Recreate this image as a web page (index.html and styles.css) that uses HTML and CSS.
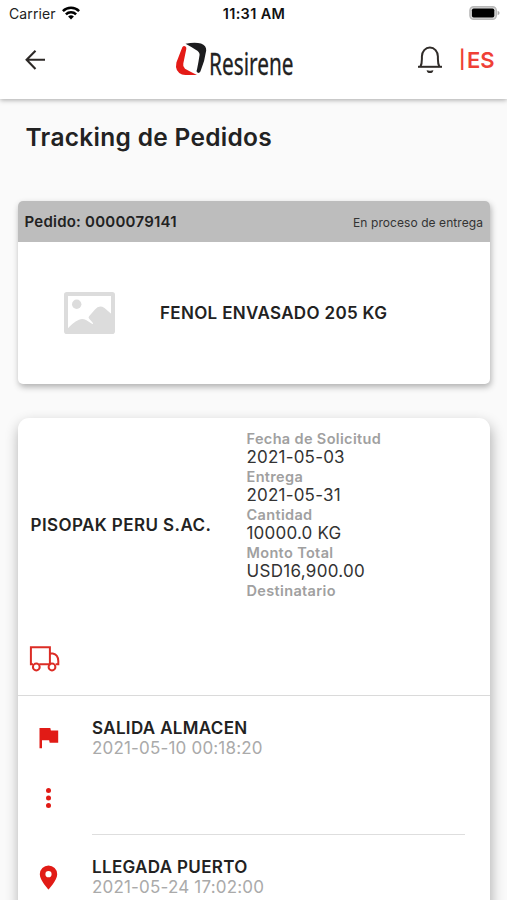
FILE: index.html
```html
<!DOCTYPE html>
<html lang="es">
<head>
<meta charset="utf-8">
<title>Tracking de Pedidos</title>
<link rel="stylesheet" href="styles.css">
</head>
<body>
<div class="screen">
  <header class="top">
    <div class="status">
      <div class="carrier"><span>Carrier</span>
        <svg width="18" height="14" viewBox="0 0 18 14" fill="none" stroke="#000" stroke-width="2.5"><path d="M.9 5.2a11.5 11.5 0 0 1 16.2 0"/><path d="M3.9 8.3a7.2 7.2 0 0 1 10.2 0"/><path d="M9 13.6 6.1 10.6a4.1 4.1 0 0 1 5.8 0z" fill="#000" stroke="none"/></svg>
      </div>
      <span class="clock">11:31 AM</span>
      <svg class="battery" width="31" height="14" viewBox="0 0 31 14"><rect x=".9" y=".7" width="26.4" height="12.6" rx="3.8" fill="#d8d8d8" stroke="#b8b8b8" stroke-width="1.4"/><rect x="2.9" y="2.4" width="22.4" height="9.2" rx="1.8" fill="#000"/><path d="M28.6 4.8q2 .8 2 2.200t-2 2.200z" fill="#aaa"/></svg>
    </div>
    <nav class="bar">
      <svg class="back" width="21" height="20" viewBox="0 0 21 20" fill="none" stroke="#2d2927" stroke-width="2.100"><path d="M10.500.8 1.600 9.800l8.900 9.100M1.400 9.800H20"/></svg>
      <svg class="logo" width="120" height="38" viewBox="0 0 120 38">
        <path d="M10.500 4.500Q8.800 3.300 7.300 5.200 5 11 1.400 20.600-.5 29.500 7 32.500q3.500.8 15 .5Q15 29.500 10 26.700 7.500 24.500 8.300 21.500L11.300 7Q11.600 5.300 10.500 4.500z" fill="#e41b17"/>
        <path d="M10.500 1.700Q20-.2 26 1.500 31.500 3.700 31.200 8.500 29.800 19.200 25.400 29.500 24.500 31.200 23 30.800 20.800 29.900 22 27.500 23.700 19 24.600 12.700 24.500 9.800 20.700 7.800 15.500 4.300 10.500 1.700z" fill="#1d1d1f"/>
        <text class="logo-text" x="34" y="32.500" textLength="84.500" lengthAdjust="spacingAndGlyphs">Resirene</text>
      </svg>
      <svg class="bell" width="26" height="28" viewBox="0 0 26 28" fill="none" stroke="#302c29" stroke-width="2"><path d="M1 20.800h24"/><path d="M3.400 20.800Q4.900 18 4.900 13V10.500a8 9 0 0 1 16 0V13q0 5 1.500 7.800"/><path d="M9.600 24.200q.5 2.900 3.400 2.900t3.400-2.900l-1.800.2q-1.600.8-3.200 0z" fill="#302c29" stroke="none"/></svg>
      <span class="lang"><span class="pipe">|</span>ES</span>
    </nav>
  </header>
  <main>
    <h1>Tracking de Pedidos</h1>
    <section class="card order">
      <div class="order-head"><b>Pedido: 0000079141</b><span>En proceso de entrega</span></div>
      <div class="order-body">
        <svg width="51" height="42" viewBox="0 0 51 42"><rect x="2" y="2" width="47" height="38" rx=".8" fill="#fff" stroke="#dcdcdc" stroke-width="4"/><circle cx="12.700" cy="12.300" r="4.700" fill="#dcdcdc"/><path d="M3 37.500Q8 31 15 27.700q3.500-1.500 7 .3l6 3.800q2 .6.500-1.200l-3.500-4q-1-1.300.3-2.500L31 17.500q4-5 9.500-1.500L48 22.500V40H3z" fill="#dcdcdc"/></svg>
        <strong>FENOL ENVASADO 205 KG</strong>
      </div>
    </section>
    <section class="card detail">
      <div class="summary">
        <strong class="client">PISOPAK PERU S.AC.</strong>
        <dl>
          <dt>Fecha de Solicitud</dt><dd>2021-05-03</dd>
          <dt>Entrega</dt><dd>2021-05-31</dd>
          <dt>Cantidad</dt><dd>10000.0 KG</dd>
          <dt>Monto Total</dt><dd class="amount">USD16,900.00</dd>
          <dt>Destinatario</dt>
        </dl>
      </div>
      <div class="transport">
        <svg width="31" height="26" viewBox="0 0 31 26" fill="none" stroke="#dc2c25" stroke-width="2"><path d="M4 18.300H1.900V1.300h19v17H10.200M20.900 7.500h2.900q5.300 1 5.500 7.500v3.300h-2.700"/><circle cx="7.300" cy="21" r="3.400"/><circle cx="23" cy="21" r="3.400"/></svg>
      </div>
      <div class="event">
        <div class="marks">
          <svg width="20" height="22" viewBox="0 0 20 22"><path d="M.5 1h10.800l.6 2.500h7.300v12.300h-8.500l-.6-2.600H3v8H.5z" fill="#e11b16"/></svg>
          <svg class="dots" width="20" height="22" viewBox="0 0 20 22" fill="#e11b16"><circle cx="9.500" cy="3.500" r="2.500"/><circle cx="9.500" cy="11" r="2.500"/><circle cx="9.500" cy="18.500" r="2.500"/></svg>
        </div>
        <div class="info"><strong>SALIDA ALMACEN</strong><time>2021-05-10 00:18:20</time></div>
      </div>
      <div class="event">
        <div class="marks pin">
          <svg width="20" height="25" viewBox="0 0 20 25"><path fill-rule="evenodd" d="M9.500.5A8.700 8.700 0 0 0 .8 9.200C.8 15.500 9.500 24.500 9.500 24.500s8.700-9 8.700-15.300A8.700 8.700 0 0 0 9.500.5zm0 5.600a3.100 3.100 0 1 1 0 6.200 3.100 3.100 0 0 1 0-6.200z" fill="#e11b16"/></svg>
        </div>
        <div class="info last"><strong>LLEGADA PUERTO</strong><time>2021-05-24 17:02:00</time></div>
      </div>
    </section>
  </main>
</div>
</body>
</html>
```
FILE: styles.css
```css
* { box-sizing: border-box; }
body { margin: 0; background: #fafafa; color: #222; font-family: Inter, "Liberation Sans", sans-serif; }
svg { display: block; flex: none; }
.screen { height: 900px; overflow: hidden; }
.top { position: relative; height: 99px; background: #fff; box-shadow: 0 1px 5px rgba(0,0,0,.34); }
.status { height: 28px; display: grid; grid-template-columns: 1fr auto 1fr; align-items: center; padding: 0 7px 0 9px; }
.carrier { display: flex; align-items: center; gap: 6px; font-size: 14px; line-height: 16px; letter-spacing: .1px; color: #222; margin-top: -1px; }
.carrier svg { margin-top: -1px; }
.clock { font-size: 14.5px; line-height: 18px; font-weight: 600; color: #111; letter-spacing: .35px; margin-left: -1px; margin-top: -1px; }
.battery { justify-self: end; margin-top: -2px; }
.bar { display: flex; height: 71px; padding: 0 0 0 25px; }
.back { margin-top: 22px; }
.logo { margin: 14px 0 0 129px; overflow: visible; }
.logo-text { font: 31.5px "Noto Sans", sans-serif; fill: #222; stroke: #222; stroke-width: .3px; }
.bell { margin: 18px 0 0 122px; }
.lang { display: flex; margin: 18px 0 0 16px; font-size: 22px; line-height: 28px; font-weight: 600; color: #ef4036; }
.pipe { font-size: 18px; width: 8px; }
main { padding: 22px 17px 0 18px; }
h1 { margin: 0 0 47px 7.5px; font-size: 24.5px; line-height: 33px; font-weight: 600; letter-spacing: .3px; }
.card { background: #fff; box-shadow: 1px 3px 6px rgba(0,0,0,.3); }
.order { height: 183px; border-radius: 5px; overflow: hidden; }
.order-head { height: 41px; background: #bdbdbd; display: flex; justify-content: space-between; align-items: center; padding: 0 7px 0 6.5px; }
.order-head b { font-size: 15px; font-weight: 600; letter-spacing: .23px; }
.order-head span { font-size: 12px; letter-spacing: .07px; color: #333; padding-top: 2px; }
.order-body { height: 142px; display: flex; align-items: center; gap: 45px; padding-left: 46px; }
strong { font-weight: 600; font-size: 17px; letter-spacing: .33px; }
.detail { margin-top: 34px; height: 540px; border-radius: 11px; box-shadow: 1px 6px 14px rgba(0,0,0,.32); }
.summary { height: 213px; display: flex; align-items: center; padding: 1px 0 0 12.5px; }
.client { width: 216px; letter-spacing: .42px; }
dl { margin: 0; height: 193px; }
dt, dd { margin: 0; line-height: 19px; white-space: nowrap; }
dt { font-size: 14.5px; font-weight: 600; color: #a0a0a0; letter-spacing: .35px; }
dd { font-size: 17px; color: #333; letter-spacing: .2px; }
.amount { letter-spacing: .3px; }
.transport { height: 65px; border-bottom: 1px solid #dadada; padding: 15px 0 0 11px; }
.event { display: flex; padding-left: 21px; height: 139px; }
.marks { width: 53px; padding-top: 31px; }
.pin { padding-top: 30px; }
.dots { margin-top: 38px; }
.info { width: 373px; height: 139px; padding-top: 22px; border-bottom: 1px solid #dedede; display: flex; flex-direction: column; }
.info strong { line-height: 20px; }
.last { border: 0; }
time { font-size: 17px; line-height: 21px; color: #aaa; letter-spacing: .18px; }
```
